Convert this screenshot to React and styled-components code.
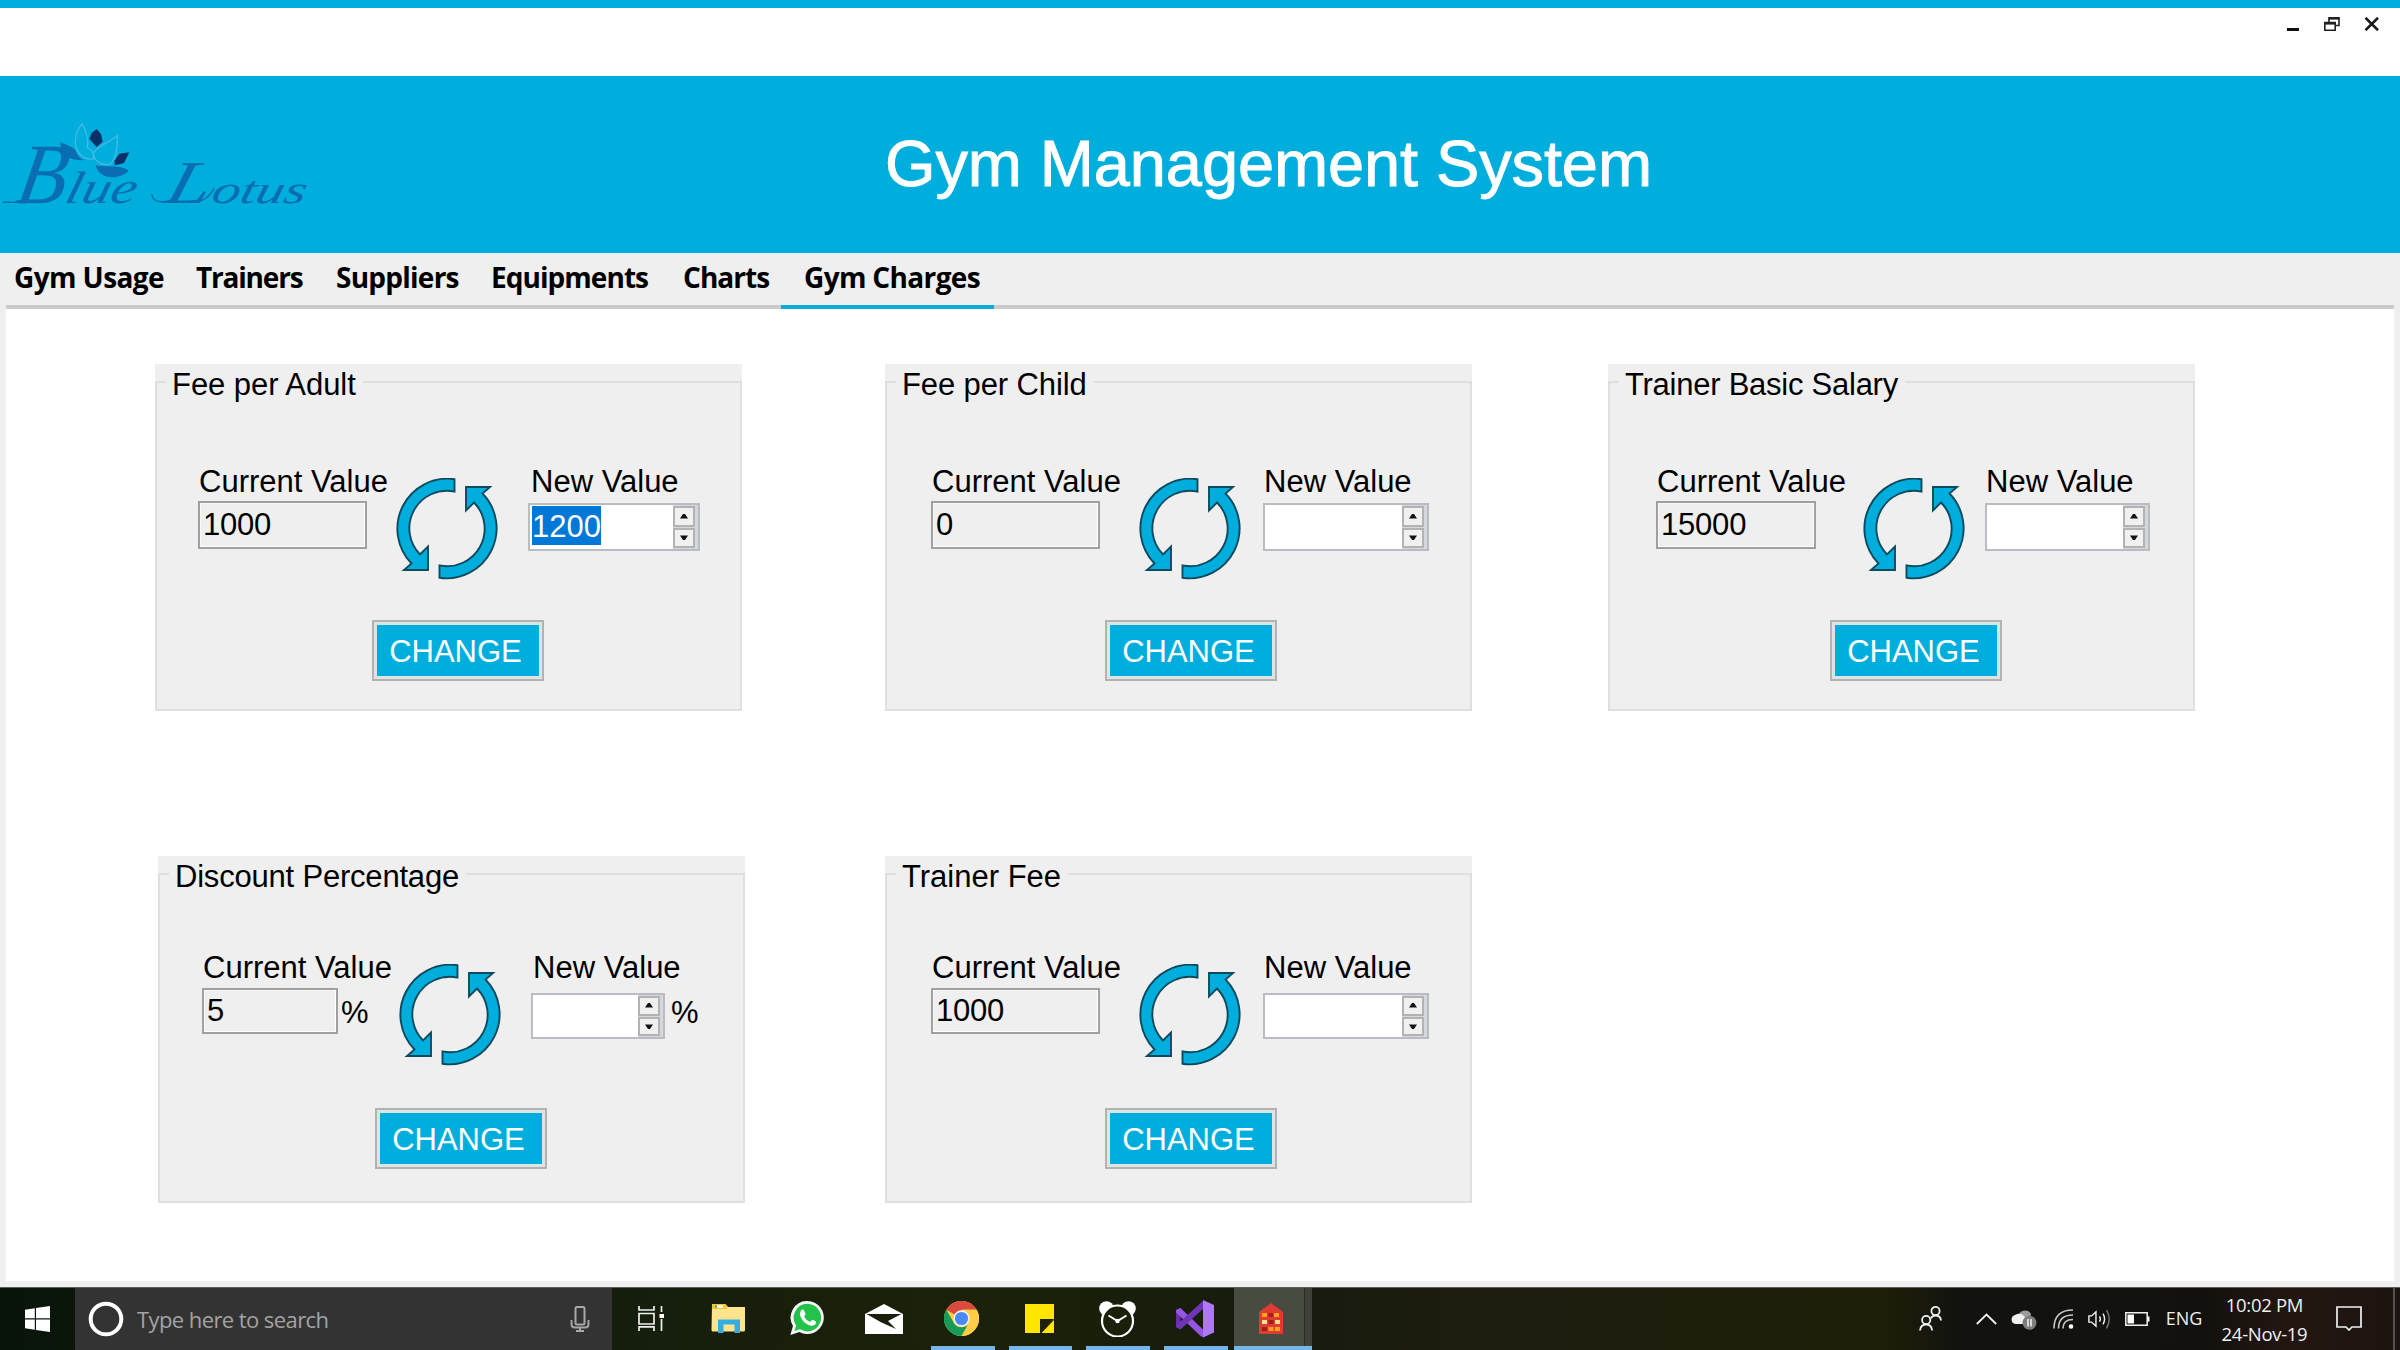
import React from "react";
import styled, { createGlobalStyle } from "styled-components";

const BLUE = "#00aedd";
const PANEL = "#efefef";

const GlobalStyle = createGlobalStyle`
  * { box-sizing: border-box; }
  body { margin: 0; background: #fff; overflow: hidden; }
  svg { display: block; }
`;

/* ---------- window ---------- */

const Screen = styled.div`
  width: 2400px;
  height: 1350px;
  display: flex;
  flex-direction: column;
  background: ${PANEL};
  font-family: "Liberation Sans", Arial, sans-serif;
  color: #000;
`;

const TitleBar = styled.div`
  height: 76px;
  border-top: 8px solid ${BLUE};
  background: #fff;
  display: flex;
  justify-content: flex-end;
  align-items: flex-start;
  padding: 9px 20px 0 0;
  gap: 24px;
`;

const Banner = styled.header`
  height: 177px;
  display: flex;
  background: ${BLUE};
`;

const BannerTitle = styled.h1`
  margin: 51px 0 0 575px;
  font-size: 65px;
  line-height: 74px;
  font-weight: 400;
  letter-spacing: -0.12px;
  color: #fff;
  white-space: nowrap;
  -webkit-text-stroke: 0.9px #fff;
`;

const TabBar = styled.nav`
  height: 56px;
  margin: 0 6px;
  display: flex;
  align-items: stretch;
  box-shadow: inset 0 -4px 0 #cbcbcb;
`;

const Tab = styled.div`
  width: ${(p) => p.$w}px;
  padding: 4px 0 0 ${(p) => p.$pad}px;
  font: 700 28px/40px "Open Sans", "Noto Sans", sans-serif;
  letter-spacing: ${(p) => p.$ls}px;
  white-space: nowrap;
  border-bottom: 4px solid ${(p) => (p.$active ? "#0fabd9" : "transparent")};
`;

const Content = styled.main`
  height: 972px;
  margin: 0 6px;
  background: #fff;
  padding-top: 55px;
`;

const CardRow = styled.section`
  display: grid;
  grid-template-columns: ${(p) => p.$cols};
  padding-left: ${(p) => p.$left}px;
  margin-bottom: 145px;
`;

/* ---------- group box ---------- */

const Card = styled.div`
  width: 587px;
  height: 347px;
  padding-top: 17px;
  background: ${PANEL};
`;

const Frame = styled.div`
  height: 330px;
  border: 2px solid #dfdfdf;
`;

const Legend = styled.div`
  width: fit-content;
  height: 36px;
  margin: -16px 0 0 9px;
  padding: 0 7px 0 6px;
  background: ${PANEL};
  font-size: 31px;
  line-height: 36px;
  letter-spacing: ${(p) => p.$ls || 0}px;
  white-space: nowrap;
`;

const Body = styled.div`
  display: grid;
  grid-template-columns: ${(p) => p.$cols};
  height: 116px;
  margin-top: ${(p) => (p.$lower ? 54 : 60)}px;
  padding-left: ${(p) => p.$left}px;
`;

const Field = styled.div`
  display: flex;
  flex-direction: column;
`;

const FieldLabel = styled.label`
  height: 36px;
  padding: 1px 0 0 ${(p) => p.$pad}px;
  font-size: 31px;
  line-height: 36px;
  white-space: nowrap;
`;

const FieldLine = styled.div`
  display: flex;
  margin-top: ${(p) => p.$top}px;
`;

const ReadOnly = styled.div`
  width: ${(p) => p.$w}px;
  height: ${(p) => (p.$lower ? 46 : 48)}px;
  padding: ${(p) => (p.$lower ? 3 : 4)}px 0 0 3px;
  border: 2px solid #a0a0a0;
  box-shadow: inset -1px -1px 0 #fff, inset 1px 1px 0 #f8f8f8;
  font-size: 31px;
  line-height: 36px;
  letter-spacing: -0.2px;
`;

const Percent = styled.span`
  font-size: 31px;
  line-height: 36px;
  padding: ${(p) => p.$top}px 0 0 ${(p) => p.$left}px;
`;

const Spinner = styled.div`
  width: ${(p) => p.$w}px;
  height: ${(p) => (p.$lower ? 46 : 48)}px;
  display: flex;
  justify-content: space-between;
  background: #fff;
  border: 2px solid #b9bcc3;
`;

const Selection = styled.span`
  height: 39px;
  margin: 1px 0 0 2px;
  background: #0078d7;
  color: #fff;
  font-size: 31px;
  line-height: 41px;
`;

const Arrows = styled.div`
  width: 25px;
  margin-left: auto;
  padding: 1px 3px 1px 0;
  display: flex;
  flex-direction: column;
  gap: 1px;
  background: #d6d7da;
`;

const Arrow = styled.div`
  flex: 1;
  display: flex;
  align-items: center;
  justify-content: center;
  border: 2px solid #b3b3b3;
  background: #f0f0f0;
`;

const IconCell = styled.div`
  padding-top: 15px;
`;

const ChangeButton = styled.button`
  display: flex;
  align-items: center;
  justify-content: center;
  width: 172px;
  height: 61px;
  margin: ${(p) => (p.$lower ? 43 : 41)}px 0 0 ${(p) => p.$left}px;
  padding: 2px 5px 0 0;
  border: 2px solid #b2b2b2;
  background: ${BLUE};
  box-shadow: inset 0 0 0 3px #dde4e6;
  color: #fff;
  font: 31px/36px "Liberation Sans", Arial, sans-serif;
`;

/* ---------- taskbar ---------- */

const Taskbar = styled.footer`
  height: 63px;
  margin-top: auto;
  display: flex;
  align-items: stretch;
  border-top: 1px solid #5c5c58;
  background: linear-gradient(90deg, #08140a 0, #0b160b 75px, #151e0d 620px, #1b210a 960px, #171b0d 1300px, #1e1d10 1500px, #1f1e08 1880px, #12130f 1960px, #12110e 2200px, #231610 2290px, #1c1410 2400px);
`;

const Slot = styled.div`
  position: relative;
  width: ${(p) => p.$w}px;
  padding-bottom: 1px;
  display: flex;
  align-items: center;
  justify-content: center;
  ${(p) => p.$active && "background: linear-gradient(90deg, #484b3f 70px, #2c2e26 70px, #2c2e26 71px, #3f4138 71px); padding-right: 4px;"}
  ${(p) => p.$line && `&::after { content: ""; position: absolute; bottom: 0; left: ${p.$active ? 0 : 8}px; right: ${p.$active ? 0 : 6}px; height: 4px; background: #76b5e6; }`}
`;

const Search = styled.div`
  width: 537px;
  display: flex;
  align-items: center;
  padding: 0 22px 1px 13px;
  background: #333;
`;

const SearchText = styled.span`
  flex: 1;
  padding-left: 13px;
  font: 22px/30px "Open Sans", sans-serif;
  letter-spacing: -0.58px;
  color: #a3a3a3;
`;

const Apps = styled.div`
  display: flex;
`;

const Tray = styled.div`
  display: flex;
  margin-left: auto;
  padding-right: 21px;
`;

const DesktopEdge = styled.div`
  width: 7px;
  border-left: 2px solid #55504c;
`;

const TrayText = styled.div`
  font: ${(p) => p.$size || 18}px/29px "Open Sans", sans-serif;
  letter-spacing: ${(p) => p.$ls || 0}px;
  color: #efefef;
  text-align: center;
`;

/* ---------- drawings ---------- */

const Logo = () => (
  <svg width="310" height="175" viewBox="0 51 930 525">
    <path d="M181 250C200 258 222 265 228 277C230 288 238 298 252 303C210 307 181 288 181 250Z" fill="#0a6cb2" />
    <path d="M247 195C262 225 265 250 262 266C278 272 283 285 280 300C245 303 225 275 226 245C228 220 238 203 247 195Z" fill="none" stroke="#43bbe0" strokeWidth="4" />
    <path d="M352 230C352 265 350 300 330 315C305 322 282 305 280 285C285 265 320 255 352 230Z" fill="none" stroke="#43bbe0" strokeWidth="4" />
    <path d="M290 210L303 225L308 248L290 264L268 240L275 222Z" fill="#063067" />
    <path d="M388 280L372 312L345 319L343 306L358 284Z" fill="#063067" />
    <path d="M287 318C310 326 360 315 386 335C360 362 297 365 287 318Z" fill="#0a6cb2" />
    <path d="M8 430C30 426 50 434 80 431M455 405C460 440 510 432 540 405M590 428C610 425 630 412 642 388" fill="none" stroke="#0a6cb2" strokeWidth="4" />
    <g fill="#0a6cb2" fontFamily="Liberation Serif, serif" fontStyle="italic">
      <text transform="translate(42 433) skewX(-10)" fontSize="258" textLength="148" lengthAdjust="spacingAndGlyphs">B</text>
      <text transform="translate(190 433) skewX(-14)" fontSize="136" textLength="212" lengthAdjust="spacingAndGlyphs">lue</text>
      <text transform="translate(490 433) skewX(-16)" fontSize="182" textLength="130" lengthAdjust="spacingAndGlyphs">L</text>
      <text transform="translate(630 433) skewX(-14)" fontSize="118" textLength="282" lengthAdjust="spacingAndGlyphs">otus</text>
    </g>
  </svg>
);

const Refresh = () => (
  <svg width="102" height="102" viewBox="0 0 102 102" fill={BLUE} stroke="#0d4a5e" strokeWidth="1.9">
    <path d="M58.5 1.2A50 50 0 0 0 15.5 85.5L8 92H32V68.5L24 76.5A37.5 37.5 0 0 1 58.5 13.6Z" />
    <path d="M43.5 99.8A50 50 0 0 0 86.5 15.5L94 9H70V32.5L78 24.5A37.5 37.5 0 0 1 43.5 87.4Z" />
  </svg>
);

const Tri = ({ down }) => (
  <svg width="8" height="5" viewBox="0 0 8 5">
    <path d={down ? "M0 0.5H8L5 5H3Z" : "M0 4.5H8L5 0H3Z"} fill="#111" />
  </svg>
);

const Minimize = () => (
  <svg width="16" height="14" viewBox="0 0 16 14"><path d="M3 11H15V14H3Z" fill="#111" /></svg>
);
const Restore = () => (
  <svg width="16" height="14" viewBox="0 0 16 14" fill="none" stroke="#222">
    <path d="M5 5V1H15V8.5H11.5" strokeWidth="1.6" /><path d="M4.5 1.3H15.5" strokeWidth="2.6" />
    <path d="M.8 5.5H11.2V13.3H.8Z" strokeWidth="1.6" fill="#fff" /><path d="M.5 6.3H11.5" strokeWidth="2.6" />
  </svg>
);
const Close = () => (
  <svg width="16" height="14" viewBox="0 0 16 14"><path d="M1.5 .8L14 13.2M14 .8L1.5 13.2" stroke="#1a1a1a" strokeWidth="2.6" /></svg>
);

const WindowsIcon = () => (
  <svg width="25" height="26" viewBox="0 0 25 26" fill="#fff">
    <path d="M0 3.8L9.8 2.2V12.3H0ZM11 2L25 0V12.3H11ZM0 13.6H9.8V23.8L0 22.2ZM11 13.6H25V26L11 24Z" />
  </svg>
);
const Cortana = () => (
  <svg width="36" height="36" viewBox="0 0 36 36"><circle cx="18" cy="18" r="15.3" fill="none" stroke="#fff" strokeWidth="4" /></svg>
);
const Mic = () => (
  <svg width="20" height="26" viewBox="0 0 20 26" fill="none" stroke="#a8a8a8" strokeWidth="2">
    <rect x="5.5" y="1" width="9" height="17.5" rx="1.5" /><path d="M1.5 14V18Q1.5 21.5 5 21.5H15Q18.5 21.5 18.5 18V14M10 21.5V25M6 25H14" />
  </svg>
);
const TaskView = () => (
  <svg width="26" height="25" viewBox="0 0 26 25" fill="none" stroke="#f0f0f0" strokeWidth="1.7">
    <path d="M1 0V4H16V0M1 7.5H16V18H1ZM1 25V20.8H16V25M23.5 0V6M23.5 13V25" /><rect x="21.5" y="8" width="4.5" height="4" fill="#fff" stroke="none" />
  </svg>
);
const Folder = () => (
  <svg width="35" height="30" viewBox="0 0 35 30">
    <path d="M1 1Q1 0 2 0H14L17 3H34V26Q34 27.5 32.5 27.5H2Q.5 27.5 .5 26Z" fill="#fde48f" />
    <path d="M1 0H14.5L17 3L15 5H1Z" fill="#f7c52e" /><path d="M4 1.3H12V3.8H4Z" fill="#fff" /><path d="M4 1.3H6V3.8H4Z" fill="#3ba66b" />
    <path d="M7 15.5H29V29H23.5V20.5H12.5V29H7Z" fill="#35ade3" />
  </svg>
);
const WhatsApp = () => (
  <svg width="34" height="35" viewBox="0 0 34 35">
    <path d="M17.5 0A16.5 16.5 0 1 1 9.4 31L.3 34L3 25A16.5 16.5 0 0 1 17.5 0Z" fill="#f6f6f6" />
    <path d="M17.5 2.8A13.8 13.8 0 1 1 10 28.3L4.4 30L6.1 24.4A13.8 13.8 0 0 1 17.5 2.8Z" fill="#23c34b" />
    <path d="M11 9.5Q12.5 8 13.8 9L15.5 12.8Q15.6 13.8 14 15.5Q16 19.5 20.2 21L22 19Q22.8 18.4 26 20.4Q26.5 22.8 24 24.2Q20 26 14.3 21.2Q7.8 14.5 11 9.5Z" fill="#fff" />
  </svg>
);
const Mail = () => (
  <svg width="38" height="30" viewBox="0 0 38 30">
    <path d="M0 10L19 0L38 10V30H0Z" fill="#fff" /><path d="M1.5 10H36.5L23 17L31 25L16 18.3Z" fill="#18200d" />
  </svg>
);
const Chrome = () => (
  <svg width="35" height="35" viewBox="0 0 48 48">
    <circle cx="24" cy="24" r="24" fill="#ffcd46" />
    <path d="M24 24L3.2 12A24 24 0 0 1 44.8 12H24Z" fill="#db4a3f" />
    <path d="M3.2 12A24 24 0 0 0 24 48L34.4 30A12 12 0 0 1 13.6 30Z" fill="#189a58" />
    <path d="M44.8 12H24A12 12 0 0 1 34.4 30L24 48A24 24 0 0 0 44.8 12Z" fill="#ffcd46" />
    <circle cx="24" cy="24" r="11.3" fill="#f1f1f1" /><circle cx="24" cy="24" r="9" fill="#4a8af4" />
  </svg>
);
const Notes = () => (
  <svg width="29" height="29" viewBox="0 0 29 29">
    <path d="M0 0H29V15L15 29H0Z" fill="#ffe600" /><path d="M15 15H29L16 29H15Z" fill="#1d210a" /><path d="M29 16V29H16.5Z" fill="#ffe600" />
  </svg>
);
const Alarm = () => (
  <svg width="37" height="36" viewBox="0 0 37 36">
    <circle cx="7.5" cy="7.5" r="7.3" fill="#fff" /><circle cx="29.5" cy="7.5" r="7.3" fill="#fff" />
    <circle cx="18.5" cy="20" r="15.5" fill="#1b200b" stroke="#fff" strokeWidth="2.2" />
    <path d="M9.5 14.5L18.5 20L27.5 14.5M18.5 20V22" stroke="#fff" strokeWidth="2" fill="none" /><circle cx="18.5" cy="20" r="2.2" fill="#fff" />
  </svg>
);
const VisualStudio = () => (
  <svg width="38" height="38" viewBox="0 0 38 38">
    <path d="M0 10L4.5 8V29.5L0 27Z" fill="#6a2eab" />
    <path d="M4.5 8L28 30.5V37.5L24.5 36L0 12.5V10Z" fill="#9655e4" />
    <path d="M4.5 29.5L28 8V0L0 25.5V27Z" fill="#6f35b5" />
    <path d="M27 0L38 5V32.5L27 37.5Z" fill="#ad78f2" />
  </svg>
);
const Building = () => (
  <svg width="26" height="31" viewBox="0 0 26 31">
    <path d="M1 9L13 0L25 9V31H1Z" fill="#e03b33" />
    <path d="M4 10H9V14H4ZM16 10H21V14H16ZM10.5 24H15.5V28H10.5ZM17 24H22V28H17Z" fill="#ffa31a" />
    <path d="M4 17H9V21H4ZM17 17H22V21H17Z" fill="#ffe08a" />
    <path d="M10.5 10H15V14H10.5ZM10.5 17H15.5V21H10.5ZM4 24H9V28H4Z" fill="#a31d1d" />
  </svg>
);
const People = () => (
  <svg width="23" height="25" viewBox="0 0 23 25" fill="none" stroke="#f0f0f0" strokeWidth="1.8">
    <circle cx="16.5" cy="5" r="4.1" /><path d="M12 12.5Q13 9.5 16.5 9.5Q21.5 9.5 22 14.5" />
    <circle cx="7.2" cy="14" r="4.1" /><path d="M1 24.5Q1.5 18.5 7.2 18.5Q12.5 18.5 13.2 24.5" />
  </svg>
);
const Chevron = () => (
  <svg width="21" height="12" viewBox="0 0 21 12"><path d="M.8 11L10.5 1.5L20.2 11" fill="none" stroke="#f0f0f0" strokeWidth="1.8" /></svg>
);
const Cloud = () => (
  <svg width="26" height="22" viewBox="0 0 26 22">
    <path d="M7 9A7 7 0 0 1 20 6Q20 9 15 12Z" fill="#9a9a9a" />
    <path d="M4.5 16A4.6 4.6 0 0 1 4 7Q9 4 13 8L18 14V16Z" fill="#f0f0f0" />
    <circle cx="18.5" cy="14.8" r="7" fill="#7e7e7e" /><path d="M17 11V18.5M20 11V18.5" stroke="#eee" strokeWidth="1.6" />
  </svg>
);
const Wifi = () => (
  <svg width="21" height="20" viewBox="0 0 21 20" fill="none" strokeWidth="1.6">
    <g stroke="#c8c8c8"><path d="M1 19.5Q1 1 20 1" /><path d="M5.5 19.5Q5.5 6 20 6" /><path d="M10 19.5Q10 10.5 20 10.5" /></g>
    <circle cx="18" cy="17.5" r="2.3" fill="#fff" />
  </svg>
);
const Volume = () => (
  <svg width="26" height="24" viewBox="0 0 26 24" fill="none" stroke="#f0f0f0" strokeWidth="1.6">
    <path d="M1 8.5H4L9 4V20L4 15.5H1Z" /><path d="M13 9Q15 12 13 15M17 6Q20.5 12 17 18" /><path d="M21 2Q27 12 21 22.5" stroke="#777" />
  </svg>
);
const Battery = () => (
  <svg width="25" height="14" viewBox="0 0 25 14">
    <path d="M.8 .8H22.2V13.2H.8Z" fill="none" stroke="#f0f0f0" strokeWidth="1.5" /><path d="M2.5 2.5H9V11.5H2.5ZM22.5 4.5H24.5V9.5H22.5Z" fill="#fff" />
  </svg>
);
const Notification = () => (
  <svg width="26" height="25" viewBox="0 0 26 25">
    <path d="M1 1H25V21H16L13 24L10 21H1Z" fill="none" stroke="#f0f0f0" strokeWidth="1.7" />
  </svg>
);

/* ---------- data ---------- */

const tabs = [
  { label: "Gym Usage", w: 174, pad: 8, ls: -0.6 },
  { label: "Trainers", w: 140, pad: 16, ls: -1.2 },
  { label: "Suppliers", w: 157, pad: 16, ls: -0.75 },
  { label: "Equipments", w: 190, pad: 14, ls: -0.95 },
  { label: "Charts", w: 114, pad: 16, ls: -0.95 },
  { label: "Gym Charges", w: 213, pad: 23, ls: -0.65, active: true },
];

const topCards = [
  { title: "Fee per Adult", ls: -0.05, value: "1000", next: "1200", left: 41, cols: "198px 132px auto", inputW: 169, spinW: 172, labelPad: 3, button: 215 },
  { title: "Fee per Child", ls: -0.12, value: "0", left: 44, cols: "208px 124px auto", inputW: 169, spinW: 166, labelPad: 1, button: 218 },
  { title: "Trainer Basic Salary", ls: -0.25, value: "15000", left: 46, cols: "207px 122px auto", inputW: 160, spinW: 165, labelPad: 1, button: 220 },
];

const bottomCards = [
  { title: "Discount Percentage", ls: -0.2, value: "5", left: 42, cols: "197px 132px auto", inputW: 136, spinW: 134, labelPad: 2, button: 215, percent: true },
  { title: "Trainer Fee", value: "1000", left: 44, cols: "208px 124px auto", inputW: 169, spinW: 166, labelPad: 1, button: 218 },
];

const apps = [
  { icon: Folder }, { icon: WhatsApp }, { icon: Mail },
  { icon: Chrome, line: true }, { icon: Notes, line: true }, { icon: Alarm, line: true },
  { icon: VisualStudio, line: true }, { icon: Building, line: true, active: true },
];

const ChargeCard = ({ card, lower }) => (
  <Card>
    <Frame>
      <Legend $ls={card.ls}>{card.title}</Legend>
      <Body $cols={card.cols} $left={card.left} $lower={lower}>
        <Field>
          <FieldLabel $pad={1}>Current Value</FieldLabel>
          <FieldLine $top={lower ? 3 : 2}>
            <ReadOnly $w={card.inputW} $lower={lower}>{card.value}</ReadOnly>
            {card.percent && <Percent $top={7} $left={3}>%</Percent>}
          </FieldLine>
        </Field>
        <IconCell><Refresh /></IconCell>
        <Field>
          <FieldLabel $pad={card.labelPad}>New Value</FieldLabel>
          <FieldLine $top={lower ? 8 : 4}>
            <Spinner $w={card.spinW} $lower={lower}>
              {card.next && <Selection>{card.next}</Selection>}
              <Arrows>
                <Arrow><Tri /></Arrow>
                <Arrow><Tri down /></Arrow>
              </Arrows>
            </Spinner>
            {card.percent && <Percent $top={2} $left={6}>%</Percent>}
          </FieldLine>
        </Field>
      </Body>
      <ChangeButton $left={card.button} $lower={lower}>CHANGE</ChangeButton>
    </Frame>
  </Card>
);

export default function App() {
  return (
    <Screen>
      <GlobalStyle />
      <TitleBar>
        <Minimize /><Restore /><Close />
      </TitleBar>
      <Banner>
        <Logo />
        <BannerTitle>Gym Management System</BannerTitle>
      </Banner>
      <TabBar>
        {tabs.map((t) => (
          <Tab key={t.label} $w={t.w} $pad={t.pad} $ls={t.ls} $active={t.active}>{t.label}</Tab>
        ))}
      </TabBar>
      <Content>
        <CardRow $left={149} $cols="730px 723px auto">
          {topCards.map((c) => <ChargeCard key={c.title} card={c} />)}
        </CardRow>
        <CardRow $left={152} $cols="727px auto">
          {bottomCards.map((c) => <ChargeCard key={c.title} card={c} lower />)}
        </CardRow>
      </Content>
      <Taskbar>
        <Slot $w={75}><WindowsIcon /></Slot>
        <Search>
          <Cortana />
          <SearchText>Type here to search</SearchText>
          <Mic />
        </Search>
        <Slot $w={78}><TaskView /></Slot>
        <Apps>
          {apps.map(({ icon: Icon, line, active }, i) => (
            <Slot key={i} $w={77.7} $line={line} $active={active}><Icon /></Slot>
          ))}
        </Apps>
        <Tray>
          <Slot $w={65}><People /></Slot>
          <Slot $w={47}><Chevron /></Slot>
          <Slot $w={28}><Cloud /></Slot>
          <Slot $w={50}><Wifi /></Slot>
          <Slot $w={23}><Volume /></Slot>
          <Slot $w={53}><Battery /></Slot>
          <Slot $w={40}><TrayText>ENG</TrayText></Slot>
          <Slot $w={121}><TrayText $size={18.5} $ls={-0.3}>10:02 PM<br />24-Nov-19</TrayText></Slot>
          <Slot $w={47}><Notification /></Slot>
        </Tray>
        <DesktopEdge />
      </Taskbar>
    </Screen>
  );
}
